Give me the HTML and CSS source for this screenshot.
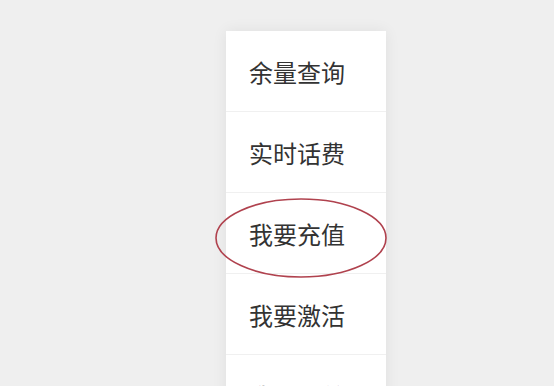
FILE: index.html
```html
<!DOCTYPE html>
<html lang="zh-CN">
<head>
    <meta charset="UTF-8">
    <title>菜单</title>
    <link rel="stylesheet" href="styles.css">
</head>
<body>
    <div class="menu">
        <div class="menu-item">余量查询</div>
        <div class="menu-item">实时话费</div>
        <div class="menu-item marked">
            我要充值
            <svg class="circle" viewBox="0 0 172 80" width="172" height="80">
                <ellipse cx="86" cy="40" rx="85" ry="39" fill="none" stroke="#b0424e" stroke-width="1.6"/>
            </svg>
        </div>
        <div class="menu-item">我要激活</div>
        <div class="menu-item">我要订单</div>
    </div>
</body>
</html>
```

FILE: styles.css
```css
body {
    margin: 0;
    background-color: #efefef;
    font-family: "Noto Sans CJK SC", "Noto Sans", sans-serif;
    color: #333;
    height: 386px;
    overflow: hidden;
}

.menu {
    width: 160px;
    margin: 31px 0 0 226px;
    background: #fff;
    box-shadow: 0 0 14px rgba(0, 0, 0, 0.07);
}

.menu-item {
    position: relative;
    height: 80px;
    padding-left: 23px;
    display: flex;
    align-items: center;
    font-size: 24px;
    border-bottom: 1px solid #f0f0f0;
}

.circle {
    position: absolute;
    left: -11px;
    top: 5px;
}
```
